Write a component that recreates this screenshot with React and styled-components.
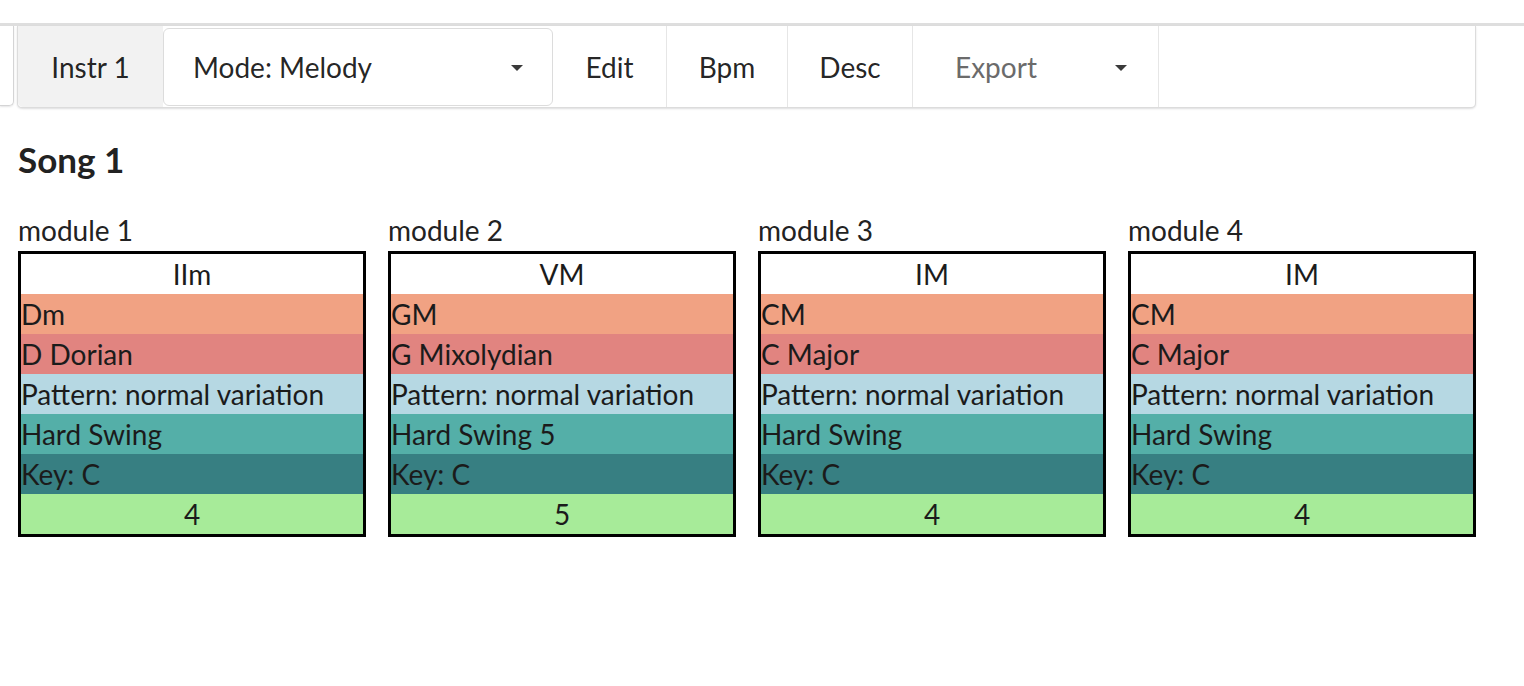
import React from 'react';
import styled, { createGlobalStyle } from 'styled-components';

const GlobalStyle = createGlobalStyle`
    html, body {
        margin: 0;
        padding: 0;
        background: #fff;
        font-family: Lato, "Helvetica Neue", Arial, sans-serif;
        color: rgba(0, 0, 0, 0.87);
    }
`

const Page = styled.div`
    width: 1524px;
    height: 686px;
    overflow: hidden;
    padding-top: 23px;
    box-sizing: border-box;
`

const TopBar = styled.div`
    display: flex;
    align-items: flex-start;
    border-top: 3px solid #dedede;
`

const CutOff = styled.div`
    width: 13px;
    height: 79px;
    border: 1px solid #d4d4d5;
    border-left: none;
    border-top: none;
    border-radius: 0 0 5px 0;
    box-shadow: 0 1px 2px rgba(34, 36, 38, 0.12);
`

const Menu = styled.div`
    display: flex;
    align-items: stretch;
    margin-left: 3px;
    width: 1459px;
    height: 82px;
    box-sizing: border-box;
    border: 1px solid #dcdcdc;
    border-top: none;
    border-radius: 0 0 5px 5px;
    box-shadow: 0 1px 2px rgba(34, 36, 38, 0.15);
    background: #fff;
    font-size: 28px;
`

const Item = styled.div`
    display: flex;
    align-items: center;
    justify-content: ${p => (p.$spread ? 'space-between' : 'center')};
    width: ${p => p.$w}px;
    padding: ${p => (p.$spread ? '0 31px 0 42px' : '0')};
    box-sizing: border-box;
    border-right: ${p => (p.$sep ? '1px solid #e6e6e6' : 'none')};
    background: ${p => (p.$active ? '#f2f2f2' : 'transparent')};
    border-radius: ${p => (p.$active ? '0 0 0 5px' : '0')};
    color: ${p => (p.$muted ? '#6b6b6b' : 'rgba(0, 0, 0, 0.87)')};
`

const Dropdown = styled.div`
    display: flex;
    align-items: center;
    justify-content: space-between;
    width: 390px;
    margin: 2px 0 1px;
    padding: 0 29px 0 29px;
    box-sizing: border-box;
    border: 1px solid #dcdcdc;
    border-radius: 6px;
    background: #fff;
`

const Caret = styled.span`
    width: 0;
    height: 0;
    border-left: 6px solid transparent;
    border-right: 6px solid transparent;
    border-top: 6px solid #3a3a3a;
    margin-top: 2px;
`

const Content = styled.div`
    padding: 0 18px;
`

const Title = styled.h2`
    margin: 30px 0 0;
    font-size: 35px;
    font-weight: 700;
    line-height: 42px;
    color: #222;
`

const Modules = styled.div`
    display: grid;
    grid-template-columns: repeat(4, 348px);
    column-gap: 22px;
    margin-top: 33px;
`

const Module = styled.div`
    display: flex;
    flex-direction: column;
`

const Label = styled.div`
    font-size: 28px;
    line-height: 34px;
    height: 34px;
    margin-bottom: 4px;
    color: #222;
`

const Box = styled.div`
    border: 3px solid #000;
    display: flex;
    flex-direction: column;
`

const Row = styled.div`
    height: 40px;
    line-height: 40px;
    font-size: 28px;
    background: ${p => p.$bg};
    text-align: ${p => (p.$center ? 'center' : 'left')};
    color: #1b1b1b;
    white-space: nowrap;
    overflow: hidden;
`

const modules = [
    { degree: 'IIm', chord: 'Dm', scale: 'D Dorian', swing: 'Hard Swing', bars: 4 },
    { degree: 'VM', chord: 'GM', scale: 'G Mixolydian', swing: 'Hard Swing 5', bars: 5 },
    { degree: 'IM', chord: 'CM', scale: 'C Major', swing: 'Hard Swing', bars: 4 },
    { degree: 'IM', chord: 'CM', scale: 'C Major', swing: 'Hard Swing', bars: 4 },
];

const App = () => {
    return (
        <Page>
            <GlobalStyle />
            <TopBar>
                <CutOff />
                <Menu>
                    <Item $w={145} $active>Instr 1</Item>
                    <Dropdown>
                        <span>Mode: Melody</span>
                        <Caret />
                    </Dropdown>
                    <Item $w={114} $sep>Edit</Item>
                    <Item $w={121} $sep>Bpm</Item>
                    <Item $w={125} $sep>Desc</Item>
                    <Item $w={246} $sep $muted $spread>
                        <span>Export</span>
                        <Caret />
                    </Item>
                </Menu>
            </TopBar>
            <Content>
                <Title>Song 1</Title>
                <Modules>
                    {modules.map((m, i) => (
                        <Module key={i}>
                            <Label>module {i + 1}</Label>
                            <Box>
                                <Row $bg="#ffffff" $center>{m.degree}</Row>
                                <Row $bg="#f1a283">{m.chord}</Row>
                                <Row $bg="#e18480">{m.scale}</Row>
                                <Row $bg="#b6d8e3">Pattern: normal variation</Row>
                                <Row $bg="#54afa8">{m.swing}</Row>
                                <Row $bg="#377f82">Key: C</Row>
                                <Row $bg="#a7eb99" $center>{m.bars}</Row>
                            </Box>
                        </Module>
                    ))}
                </Modules>
            </Content>
        </Page>
    );
}

export default App;
